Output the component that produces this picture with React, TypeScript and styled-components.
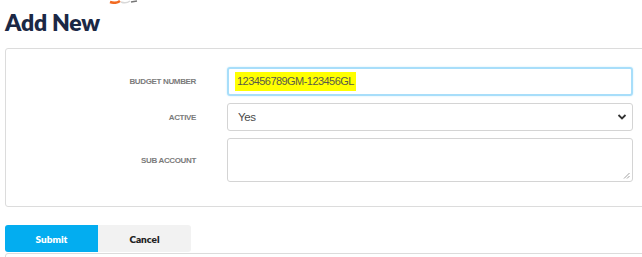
import React from "react";
import styled, { createGlobalStyle } from "styled-components";

const GlobalStyle = createGlobalStyle`
    html, body {
        margin: 0;
        padding: 0;
        background: #ffffff;
        overflow: hidden;
    }
    body {
        font-family: Lato, "Liberation Sans", sans-serif;
    }
`;

const Page = styled.div`
    width: 642px;
    height: 257px;
    position: relative;
    overflow: hidden;
`;

const Logo = styled.svg`
    position: absolute;
    left: 108px;
    top: -6px;
`;

const Title = styled.h1`
    margin: 0;
    padding: 8px 0 0 5px;
    height: 40px;
    box-sizing: border-box;
    font-family: Lato, sans-serif;
    font-weight: 800;
    font-size: 23px;
    color: #1b2845;
    letter-spacing: -0.2px;
`;

const Card = styled.div`
    margin: 8px 0 0 5px;
    width: 665px;
    border: 1px solid #dcdcdc;
    border-radius: 3px;
    padding: 18px 0 24px 0;
    display: grid;
    grid-template-columns: 190px 406px;
    column-gap: 31px;
    row-gap: 7px;
    align-items: center;
`;

const Label = styled.label`
    text-align: right;
    font-family: "Liberation Sans", sans-serif;
    font-size: 8px;
    font-weight: 700;
    color: #7b7b7b;
    text-transform: uppercase;
    letter-spacing: -0.35px;
`;

const TextInput = styled.div`
    height: 29px;
    box-sizing: border-box;
    border: 2px solid #a8defa;
    border-radius: 3px;
    box-shadow: 0 0 2px #c7ebfc;
    display: flex;
    align-items: center;
    padding-left: 6px;
`;

const Highlight = styled.span`
    background: #ffff00;
    color: #5a5a4a;
    font-family: "Liberation Sans", sans-serif;
    font-size: 11px;
    line-height: 19px;
    padding: 0 2px;
    letter-spacing: -0.55px;
`;

const Select = styled.div`
    height: 28px;
    box-sizing: border-box;
    border: 1px solid #d4d4d4;
    border-radius: 3px;
    display: flex;
    align-items: center;
    justify-content: space-between;
    padding: 0 5px 0 10px;
    font-family: "Liberation Sans", sans-serif;
    font-size: 11.5px;
    letter-spacing: -0.4px;
    color: #4a4a4a;
`;

const Area = styled.div`
    height: 44px;
    box-sizing: border-box;
    border: 1px solid #d4d4d4;
    border-radius: 3px;
    position: relative;
`;

const Grip = styled.svg`
    position: absolute;
    right: 2px;
    bottom: 2px;
`;

const Actions = styled.div`
    display: flex;
    margin: 18px 0 0 5px;
    height: 27px;
`;

const Button = styled.button<{ $primary?: boolean }>`
    width: 93px;
    height: 27px;
    border: none;
    border-radius: ${(p) => (p.$primary ? "3px 0 0 3px" : "0 3px 3px 0")};
    background: ${(p) => (p.$primary ? "#03adf0" : "#f2f2f2")};
    color: ${(p) => (p.$primary ? "#ffffff" : "#222222")};
    font-family: Lato, sans-serif;
    font-weight: 800;
    font-size: 10px;
    padding: 0;
    cursor: pointer;
`;

const NextCard = styled.div`
    margin: 1px 0 0 5px;
    width: 665px;
    height: 30px;
    border: 1px solid #dcdcdc;
    border-radius: 3px;
`;

export default function App() {
    return (
        <Page>
            <GlobalStyle />
            <Logo width="34" height="10" viewBox="0 0 34 10">
                <path d="M2 8 Q8 10 12 7" stroke="#f26a21" strokeWidth="2.5" fill="none" />
                <path d="M13 8 Q18 10 22 7" stroke="#d8d8d8" strokeWidth="1.5" fill="none" />
                <path d="M23 8 L29 7" stroke="#777" strokeWidth="1.5" fill="none" />
            </Logo>
            <Title>Add New</Title>
            <Card>
                <Label>Budget Number</Label>
                <TextInput>
                    <Highlight>123456789GM-123456GL</Highlight>
                </TextInput>
                <Label>Active</Label>
                <Select>
                    <span>Yes</span>
                    <svg width="10" height="8" viewBox="0 0 10 8">
                        <path d="M1.5 2 L5 5.5 L8.5 2" stroke="#333" strokeWidth="1.8" fill="none" />
                    </svg>
                </Select>
                <Label>Sub Account</Label>
                <Area>
                    <Grip width="7" height="7" viewBox="0 0 7 7">
                        <path d="M6.5 1 L1 6.5 M6.5 4 L4 6.5" stroke="#888" strokeWidth="0.8" />
                    </Grip>
                </Area>
            </Card>
            <Actions>
                <Button $primary>Submit</Button>
                <Button>Cancel</Button>
            </Actions>
            <NextCard />
        </Page>
    );
}
